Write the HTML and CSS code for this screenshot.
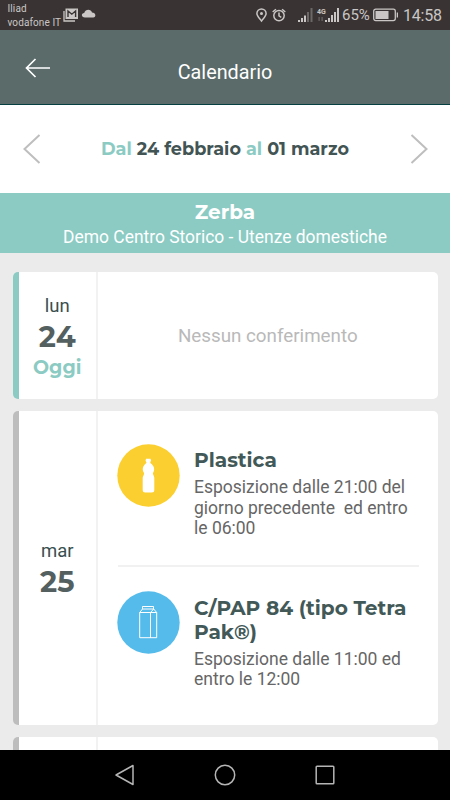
FILE: index.html
```html
<!DOCTYPE html>
<html lang="it">
<head>
<meta charset="utf-8">
<title>Calendario</title>
<link rel="stylesheet" href="styles.css">
</head>
<body>
<div class="phone">
  <div class="status">
    <div class="carrier">Iliad<br>vodafone IT</div>
    <svg class="notifications" width="36" height="14" viewBox="0 0 36 14">
      <path d="M1 3v10h11" fill="none" stroke="#c9c6c5" stroke-width="1.3"/>
      <path d="M2.5 0.5h12.5v10.5h-12.500z" fill="#c9c6c5"/>
      <path d="M5 9V3l3.800 3.200L12.600 3v6" fill="none" stroke="#393433" stroke-width="1.400"/>
      <path d="M22 9.500c-4 0-4-4.500-.8-4.500C22.500.8 28 .8 29 4.600c4 0 4.500 4.900 1.200 4.900z" fill="#c9c6c5"/>
    </svg>
    <svg class="signals" width="86" height="20" viewBox="255 5 86 20">
      <g fill="none" stroke="#c9c6c5" stroke-width="1.500">
        <path d="M261.500 21c-2-2.700-4.600-5-4.600-7.500a4.600 4.600 0 0 1 9.200 0c0 2.500-2.600 4.800-4.600 7.500z"/>
        <circle cx="279" cy="15.600" r="5.200"/>
        <path d="M279 12.500v3.400l2.300 1.400M272.700 12l3.200-2.700M285.300 12l-3.200-2.700"/>
      </g>
      <circle cx="261.500" cy="13.600" r="1.500" fill="#c9c6c5"/>
      <path d="M298 20h2v2h-2zM301 18h2v4h-2zM304 15.500h2v6.500h-2zM325 20h2v2h-2zM328 18h2v4h-2zM331 15h2v7h-2zM334 12h2v10h-2zM337 8h2v14h-2z" fill="#c9c6c5"/>
      <path d="M307 12h2v10h-2zM310.500 8h2v14h-2zM318.500 17h1.200v4h-1.200zM321.500 17h1.200v4h-1.200z" fill="#6b6766"/>
      <text x="317" y="14" class="network">4G</text>
    </svg>
    <span class="percent">65%</span>
    <svg class="battery" width="26" height="14" viewBox="0 0 26 14">
      <rect x=".7" y="1.200" width="21.600" height="11.400" rx="2" fill="none" stroke="#c9c6c5" stroke-width="1.300"/>
      <path d="M2.500 3h13v8h-13zM23.700 4.500h1.300v5h-1.300z" fill="#c9c6c5"/>
    </svg>
    <span class="clock">14:58</span>
  </div>

  <header class="header">
    <svg class="back" width="26" height="20" viewBox="0 0 26 20"><path d="M10.500 1 1.500 10l9 9M1.500 10H25" fill="none" stroke="#fff" stroke-width="1.700"/></svg>
    <h1>Calendario</h1>
  </header>

  <nav class="week">
    <svg width="18" height="30" viewBox="0 0 18 30"><path d="M16.500 1 1.500 15l15 14" fill="none" stroke="#bebebe" stroke-width="2"/></svg>
    <div class="range"><em>Dal</em> 24 febbraio <em>al</em> 01 marzo</div>
    <svg width="18" height="30" viewBox="0 0 18 30"><path d="m1.500 1 15 14-15 14" fill="none" stroke="#bebebe" stroke-width="2"/></svg>
  </nav>

  <section class="place">
    <h2>Zerba</h2>
    <p>Demo Centro Storico - Utenze domestiche</p>
  </section>

  <main class="days">
    <article class="card today">
      <div class="date"><span class="weekday">lun</span><b>24</b><span class="now">Oggi</span></div>
      <div class="empty">Nessun conferimento</div>
    </article>
    <article class="card full">
      <div class="date"><span class="weekday">mar</span><b>25</b></div>
      <div class="items">
        <div class="item">
          <svg class="icon" width="63" height="63" viewBox="0 0 63 63">
            <circle cx="31.500" cy="31.500" r="31.200" fill="#fbcf2f"/>
            <path d="M29 14.800h4.500q1.200 1.800-.3 3.600l.4.800c3.700 2.700 4.500 6.400 2.600 9.300q-.7 1.300.4 2.900.7 1.200.7 2.600v12q0 2.500-2.500 2.500h-6.600q-2.500 0-2.500-2.500V34q0-1.500.8-2.600 1.100-1.600.3-2.900c-1.900-2.900-1.100-6.600 2.300-9.300l.4-.8q-1.700-1.600-.5-3.600z" fill="#fff"/>
          </svg>
          <div class="text">
            <h3>Plastica</h3>
            <p>Esposizione dalle 21:00 del<br>giorno precedente&nbsp; ed entro<br>le 06:00</p>
          </div>
        </div>
        <div class="item carton">
          <svg class="icon" width="63" height="63" viewBox="0 0 63 63">
            <circle cx="31.500" cy="31.500" r="31.200" fill="#54bbeb"/>
            <path d="M22.700 21.500v25.200h17V21.500l-3-3.500H25.500zM22.700 21.500h10.800l3.200-3.500M33.500 21.500v25.200M25.500 18v-2.500h11V18M33.500 21.500h6.200" fill="none" stroke="#fff" stroke-width="1"/>
          </svg>
          <div class="text">
            <h3>C/PAP 84 (tipo Tetra<br>Pak®)</h3>
            <p>Esposizione dalle 11:00 ed<br>entro le 12:00</p>
          </div>
        </div>
      </div>
    </article>
    <article class="card next"><div class="date"></div></article>
  </main>

  <footer class="controls">
    <svg width="22" height="22" viewBox="0 0 22 22"><path d="M19 1.500v19L2 11z" fill="none" stroke="#b5b5b5" stroke-width="1.500" stroke-linejoin="round"/></svg>
    <svg width="22" height="22" viewBox="0 0 22 22"><circle cx="11" cy="11" r="9.700" fill="none" stroke="#b5b5b5" stroke-width="1.500"/></svg>
    <svg width="22" height="22" viewBox="0 0 22 22"><rect x="2.200" y="2.200" width="17.600" height="17.600" rx=".8" fill="none" stroke="#b5b5b5" stroke-width="1.500"/></svg>
  </footer>
</div>
</body>
</html>
```
FILE: styles.css
```css
* { box-sizing: border-box; }
body { margin: 0; font-family: Roboto, "Liberation Sans", sans-serif; }
h1, h2, h3, p { margin: 0; }
svg { display: block; flex: none; }
.phone { width: 450px; height: 800px; display: flex; flex-direction: column; overflow: hidden; background: #ebebeb; }

.status { height: 30px; flex: none; display: flex; align-items: center; padding-left: 7.500px; background: #393433; color: #c9c6c5; white-space: nowrap; }
.carrier { width: 55.500px; padding-top: 1px; font-size: 10px; line-height: 14px; letter-spacing: .1px; }
.notifications { margin-top: 0; }
.signals { margin-left: 156px; }
.network { font: bold 7px Roboto, sans-serif; fill: #c9c6c5; }
.percent { width: 31px; margin-left: 1px; font-size: 15px; }
.clock { margin-left: 4px; padding-top: 1px; font-size: 16px; letter-spacing: -.2px; }

.header { height: 75px; flex: none; display: flex; align-items: center; padding: 10px 25px 0; background: #5a6b6a; border-bottom: 1px solid #063f42; color: #fff; }
.back { margin-top: -9px; }
.header h1 { flex: 1; margin-right: 26px; padding-top: 1px; text-align: center; font-size: 19.800px; font-weight: 400; }

.week { height: 87.500px; flex: none; display: flex; align-items: center; justify-content: space-between; padding: 0 22.500px; background: #fff; }
.range, .place h2, .date b, .now, h3 { font-family: Montserrat, Inter, sans-serif; font-weight: 700; white-space: nowrap; }
.range { font-size: 17.650px; color: #425453; }
.range em { font-style: normal; color: #8bcbc3; }

.place { height: 60.500px; flex: none; padding-top: 7.500px; background: #8bcbc3; color: #fff; text-align: center; }
.place h2 { font-size: 20px; line-height: 25px; }
.place p { font-size: 17.450px; line-height: 25px; }

.days { height: 497px; flex: none; overflow: hidden; padding: 19px 12.500px 0; display: flex; flex-direction: column; gap: 12px; }
.card { flex: none; display: flex; background: #fff; border-left: 6.500px solid #bdbdbd; border-radius: 5px; overflow: hidden; }
.today { height: 127px; border-left-color: #8bcbc3; }
.full { height: 313.500px; }
.next { height: 60px; }
.date { width: 79.500px; flex: none; display: flex; flex-direction: column; align-items: center; justify-content: center; padding-top: 2px; border-right: 2px solid #f2f2f2; }
.weekday { font-size: 18.500px; line-height: 26px; color: #394f50; }
.date b { font-size: 29px; line-height: 36px; color: #53605f; }
.now { font-size: 19px; line-height: 25px; color: #8bcbc3; }
.empty { flex: 1; align-self: center; text-align: center; font-size: 18.800px; color: #b9b9b9; }

.items { flex: 1; padding: 33px 19px 0 20px; }
.item { display: flex; gap: 14px; }
.item .icon { margin-left: -1px; }
.text { padding-top: 4px; }
h3 { font-size: 20.100px; line-height: 24px; color: #425958; }
.text p { margin-top: 5px; font-size: 17.500px; line-height: 20.500px; color: #666; white-space: nowrap; }
.carton { margin-top: 26px; padding-top: 24px; border-top: 2px solid #f1f1f1; }
.carton .text { padding-top: 5px; }

.controls { height: 50px; flex: none; display: flex; align-items: center; justify-content: space-between; padding: 0 114px; background: #000; }
```
